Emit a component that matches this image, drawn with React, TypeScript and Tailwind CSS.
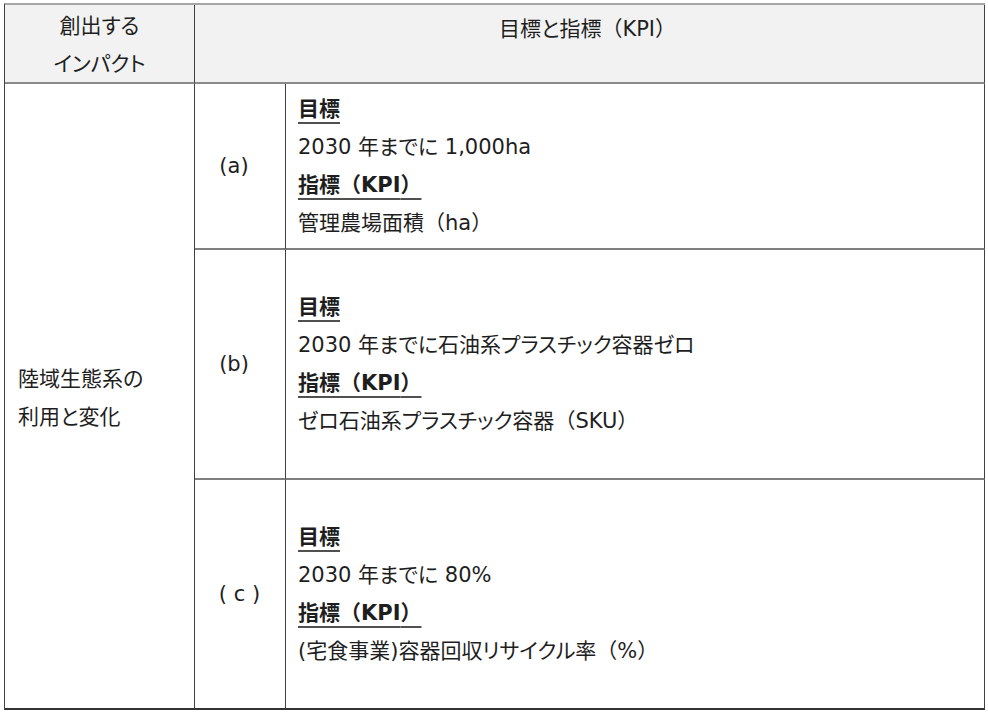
function T({ s }: { s: string }) {
  const parts = s.split(/([（）])/);
  return (
    <>
      {parts.map((p, i) =>
        p === "（" || p === "）" ? (
          <span key={i} className="[font-feature-settings:normal]">
            {p}
          </span>
        ) : (
          <span key={i}>{p}</span>
        )
      )}
    </>
  );
}

const ul = "font-bold underline decoration-2 decoration-[#505050] underline-offset-[6px]";

function Kpi({ goal, metric, last }: { goal: string; metric: string; last?: boolean }) {
  return (
    <div
      className={
        "flex flex-col justify-center pl-[12px] border-r border-r-[#404040] border-b-2 " +
        (last ? "border-b-[#333333]" : "border-b-[#7f7f7f]")
      }
    >
      <div>
        <span className={ul}>目標</span>
      </div>
      <div>
        <T s={goal} />
      </div>
      <div>
        <span className={ul}>
          <T s="指標（KPI）" />
        </span>
      </div>
      <div>
        <T s={metric} />
      </div>
    </div>
  );
}

function Label({ t, last }: { t: string; last?: boolean }) {
  return (
    <div
      className={
        "flex items-center justify-center border-r border-r-[#404040] border-b-2 " +
        (last ? "border-b-[#333333] pr-[1px]" : "border-b-[#7f7f7f] pr-[12px]")
      }
    >
      {t}
    </div>
  );
}

export default function App() {
  return (
    <div className="w-[988px] h-[712px] bg-white pt-[3px] pl-[4px] text-[21px] leading-[38px] text-[#1e1e1e] font-['DejaVu_Sans','Noto_Sans_CJK_JP',sans-serif] [font-feature-settings:'palt']">
      <div className="grid w-[981px] grid-cols-[190px_91px_699px] grid-rows-[79px_166px_230px_230px] border-l border-l-[#404040] border-t-2 border-t-[#a6a6a6]">
        <div className="bg-[#f2f2f2] border-r border-r-[#404040] border-b-2 border-b-[#8a8a8a] flex flex-col items-center justify-center pt-[2px]">
          <div>創出する</div>
          <div>インパクト</div>
        </div>
        <div className="col-span-2 bg-[#f2f2f2] border-r border-r-[#404040] border-b-2 border-b-[#8a8a8a] flex justify-center pt-[5px] pr-[4px]">
          <div>
            <T s="目標と指標（KPI）" />
          </div>
        </div>
        <div className="row-span-3 flex flex-col justify-center pl-[13px] pt-[4px] border-r border-r-[#404040] border-b-2 border-b-[#333333]">
          <div>陸域生態系の</div>
          <div>利用と変化</div>
        </div>
        <Label t="(a)" />
        <Kpi goal="2030 年までに 1,000ha" metric="管理農場面積（ha）" />
        <Label t="(b)" />
        <Kpi goal="2030 年までに石油系プラスチック容器ゼロ" metric="ゼロ石油系プラスチック容器（SKU）" />
        <Label t="( c )" last />
        <Kpi goal="2030 年までに 80%" metric="(宅食事業)容器回収リサイクル率（%）" last />
      </div>
    </div>
  );
}
